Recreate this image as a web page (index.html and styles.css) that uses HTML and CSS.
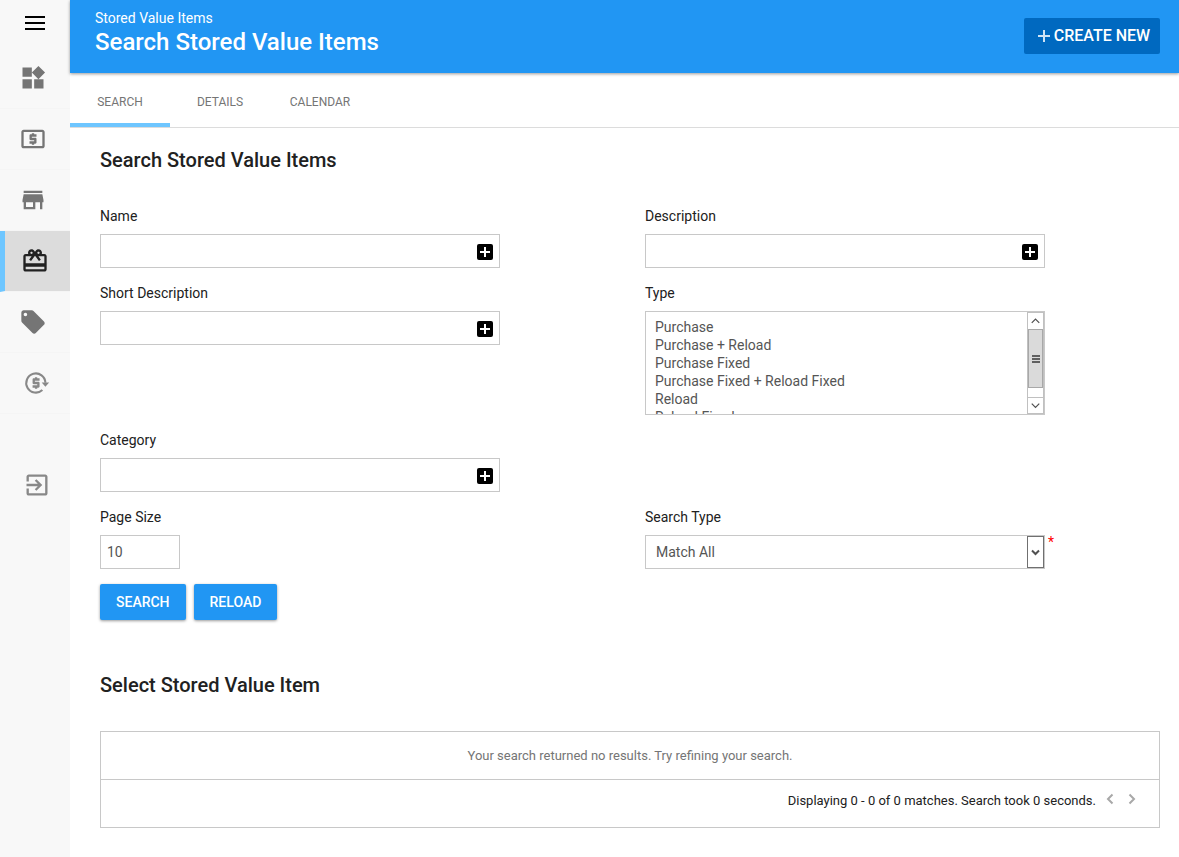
FILE: index.html
```html
<!DOCTYPE html>
<html lang="en">
<head>
<meta charset="utf-8">
<meta name="viewport" content="width=device-width, initial-scale=1">
<title>Search Stored Value Items</title>
<link rel="stylesheet" href="styles.css">
</head>
<body>
<div class="app">
  <aside class="sidebar">
    <button class="menu-button" type="button" aria-label="Menu">
      <svg width="20" height="14" viewBox="0 0 20 14"><path d="M0 0h20v2H0zM0 6h20v2H0zM0 12h20v2H0z"/></svg>
    </button>
    <nav class="side-nav" aria-label="Main">
      <a class="side-link" href="#" aria-label="Dashboard">
        <svg class="side-icon" viewBox="0 0 24 24"><path d="M13 13v8h8v-8h-8zM3 21h8v-8H3v8zM3 3v8h8V3H3zm13.66-1.31L11 7.34 16.66 13l5.66-5.66-5.66-5.65z"/></svg>
      </a>
      <a class="side-link" href="#" aria-label="Cash">
        <svg class="side-icon" viewBox="0 0 24 24"><path d="M11 17h2v-1h1c.55 0 1-.45 1-1v-3c0-.55-.45-1-1-1h-3v-1h4V8h-2V7h-2v1h-1c-.55 0-1 .45-1 1v3c0 .55.45 1 1 1h3v1H9v2h2v1zm9-13H4c-1.11 0-1.99.89-1.99 2L2 18c0 1.11.89 2 2 2h16c1.11 0 2-.89 2-2V6c0-1.11-.89-2-2-2zm0 14H4V6h16v12z"/></svg>
      </a>
      <a class="side-link" href="#" aria-label="Store">
        <svg class="side-icon" viewBox="0 0 24 24"><path d="M20 4H4v2h16V4zm1 10v-2l-1-5H4l-1 5v2h1v6h10v-6h4v6h2v-6h1zm-9 4H6v-4h6v4z"/></svg>
      </a>
      <a class="side-link side-link-active" href="#" aria-label="Stored value items" aria-current="page">
        <svg class="side-icon" viewBox="0 0 24 24"><path d="M20 6h-2.18c.11-.31.18-.65.18-1 0-1.66-1.34-3-3-3-1.05 0-1.96.54-2.5 1.35l-.5.67-.5-.68C10.96 2.54 10.05 2 9 2 7.34 2 6 3.34 6 5c0 .35.07.69.18 1H4c-1.11 0-1.99.89-1.99 2L2 19c0 1.11.89 2 2 2h16c1.11 0 2-.89 2-2V8c0-1.11-.89-2-2-2zm-5-2c.55 0 1 .45 1 1s-.45 1-1 1-1-.45-1-1 .45-1 1-1zM9 4c.55 0 1 .45 1 1s-.45 1-1 1-1-.45-1-1 .45-1 1-1zm11 15H4v-2h16v2zm0-5H4V8h5.08L7 10.83 8.62 12 11 8.76l1-1.36 1 1.36L15.38 12 17 10.83 14.92 8H20v6z"/></svg>
      </a>
      <a class="side-link" href="#" aria-label="Tags">
        <svg class="side-icon" viewBox="0 0 24 24"><path d="M21.41 11.58l-9-9C12.05 2.22 11.55 2 11 2H4c-1.1 0-2 .9-2 2v7c0 .55.22 1.05.59 1.42l9 9c.36.36.86.58 1.41.58.55 0 1.05-.22 1.41-.59l7-7c.37-.36.59-.86.59-1.41 0-.55-.23-1.06-.59-1.42zM5.5 7C4.67 7 4 6.33 4 5.5S4.67 4 5.5 4 7 4.67 7 5.5 6.33 7 5.5 7z"/></svg>
      </a>
      <a class="side-link side-link-light" href="#" aria-label="Refunds">
        <svg class="side-icon" viewBox="0 0 24 24"><path fill="none" stroke="currentColor" stroke-width="1.8" d="M19.200 11.800A8.200 8.200 0 1 0 16.600 18"/><path d="M16 11.500h6.400L19.200 15.200zM10.200 17h2v-1h1c.55 0 1-.45 1-1v-3c0-.55-.45-1-1-1h-3v-1h4V8h-2V7h-2v1h-1c-.55 0-1 .45-1 1v3c0 .55.45 1 1 1h3v1h-4v2h2v1z"/></svg>
      </a>
      <a class="side-link side-link-light side-link-exit" href="#" aria-label="Sign out">
        <svg class="side-icon" viewBox="0 0 24 24"><path d="M10.09 15.59L11.5 17l5-5-5-5-1.41 1.41L12.67 11H3v2h9.67l-2.58 2.59zM19 3H5c-1.11 0-2 .9-2 2v4h2V5h14v14H5v-4H3v4c0 1.1.89 2 2 2h14c1.1 0 2-.9 2-2V5c0-1.1-.9-2-2-2z"/></svg>
      </a>
    </nav>
  </aside>

  <div class="page">
    <header class="topbar">
      <div class="titles">
        <p class="breadcrumb">Stored Value Items</p>
        <h1 class="page-title">Search Stored Value Items</h1>
      </div>
      <button class="create-button" type="button">
        <svg width="12" height="12" viewBox="0 0 12 12"><path d="M5 0h2v5h5v2H7v5H5V7H0V5h5z"/></svg>
        CREATE NEW
      </button>
    </header>

    <nav class="tabs" aria-label="Sections">
      <a class="tab tab-active" href="#" aria-current="page">SEARCH</a>
      <a class="tab" href="#">DETAILS</a>
      <a class="tab" href="#">CALENDAR</a>
    </nav>

    <main class="content">
      <h2 class="section-title">Search Stored Value Items</h2>
      <form class="search-form">
        <div class="fields">
          <div class="field">
            <label class="label" for="name">Name</label>
            <div class="control">
              <input class="input" id="name" type="text">
              <button class="add-button" type="button" aria-label="Add name"><svg width="16" height="16" viewBox="0 0 16 16"><rect width="16" height="16" rx="2"/><path fill="#fff" d="M7 3h2v4h4v2H9v4H7V9H3V7h4z"/></svg></button>
            </div>
          </div>
          <div class="field">
            <label class="label" for="description">Description</label>
            <div class="control">
              <input class="input" id="description" type="text">
              <button class="add-button" type="button" aria-label="Add description"><svg width="16" height="16" viewBox="0 0 16 16"><rect width="16" height="16" rx="2"/><path fill="#fff" d="M7 3h2v4h4v2H9v4H7V9H3V7h4z"/></svg></button>
            </div>
          </div>
          <div class="field">
            <label class="label" for="short-description">Short Description</label>
            <div class="control">
              <input class="input" id="short-description" type="text">
              <button class="add-button" type="button" aria-label="Add short description"><svg width="16" height="16" viewBox="0 0 16 16"><rect width="16" height="16" rx="2"/><path fill="#fff" d="M7 3h2v4h4v2H9v4H7V9H3V7h4z"/></svg></button>
            </div>
          </div>
          <div class="field">
            <label class="label" for="type">Type</label>
            <div class="control">
              <select class="listbox" id="type" multiple>
                <option>Purchase</option>
                <option>Purchase + Reload</option>
                <option>Purchase Fixed</option>
                <option>Purchase Fixed + Reload Fixed</option>
                <option>Reload</option>
                <option>Reload Fixed</option>
              </select>
              <div class="scrollbar" aria-hidden="true">
                <svg class="scroll-arrow" viewBox="0 0 16 16"><path d="M4 10l4-4 4 4"/></svg>
                <div class="scroll-thumb"><svg width="8" height="8" viewBox="0 0 8 8"><path d="M0 0h8v2H0zM0 3h8v2H0zM0 6h8v2H0z"/></svg></div>
                <svg class="scroll-arrow scroll-down" viewBox="0 0 16 16"><path d="M4 6l4 4 4-4"/></svg>
              </div>
            </div>
          </div>
          <div class="field field-first">
            <label class="label" for="category">Category</label>
            <div class="control">
              <input class="input" id="category" type="text">
              <button class="add-button" type="button" aria-label="Add category"><svg width="16" height="16" viewBox="0 0 16 16"><rect width="16" height="16" rx="2"/><path fill="#fff" d="M7 3h2v4h4v2H9v4H7V9H3V7h4z"/></svg></button>
            </div>
          </div>
          <div class="field field-first">
            <label class="label" for="page-size">Page Size</label>
            <input class="input input-short" id="page-size" type="text" value="10">
          </div>
          <div class="field">
            <label class="label" for="search-type">Search Type</label>
            <div class="control">
              <select class="input dropdown" id="search-type" required>
                <option>Match All</option>
                <option>Match Any</option>
              </select>
              <span class="dropdown-arrow" aria-hidden="true"><svg width="9" height="7" viewBox="0 0 9 7"><path d="M1 1.500l3.500 3.500L8 1.500"/></svg></span>
              <span class="required">*</span>
            </div>
          </div>
        </div>
        <div class="actions">
          <button class="button" type="submit">SEARCH</button>
          <button class="button" type="button">RELOAD</button>
        </div>
      </form>

      <h2 class="section-title results-title">Select Stored Value Item</h2>
      <section class="results" aria-label="Results">
        <p class="results-empty">Your search returned no results. Try refining your search.</p>
        <div class="results-footer">
          <span>Displaying 0 - 0 of 0 matches. Search took 0 seconds.</span>
          <div class="pager">
            <button class="pager-button" type="button" aria-label="Previous page"><svg width="8" height="12" viewBox="0 0 8 12"><path d="M6.500 1.500L2 6l4.500 4.500"/></svg></button>
            <button class="pager-button" type="button" aria-label="Next page"><svg width="8" height="12" viewBox="0 0 8 12"><path d="M1.500 1.500L6 6l-4.500 4.500"/></svg></button>
          </div>
        </div>
      </section>
    </main>
  </div>
</div>
</body>
</html>
```
FILE: styles.css
```css
* { box-sizing: border-box; }
body {
  margin: 0;
  background: #fff;
  color: #212121;
  font-family: Roboto, "Liberation Sans", sans-serif;
  font-size: 14px;
  line-height: 18px;
}
button, input, select { font: inherit; margin: 0; }
button { border: 0; padding: 0; background: none; cursor: pointer; }
a { text-decoration: none; color: inherit; }
h1, h2, p { margin: 0; }
svg { display: block; flex: none; }

.app { display: flex; min-height: 100vh; }

/* Sidebar */
.sidebar { flex: none; width: 70px; background: #f8f8f8; }
.menu-button {
  display: flex;
  align-items: center;
  justify-content: center;
  width: 100%;
  height: 46px;
  margin-bottom: 2px;
}
.side-nav { display: flex; flex-direction: column; }
.side-link {
  display: flex;
  align-items: center;
  height: 61px;
  padding-left: 19px;
  border-bottom: 1px solid #f5f5f5;
  color: #757575;
}
.side-icon { width: 28px; height: 28px; fill: currentColor; }
.side-link-active {
  padding-left: 16px;
  border-left: 5px solid #6ec6ff;
  background: #dcdcdc;
  background-clip: padding-box;
  color: #212121;
}
.side-link-light { padding-left: 23px; color: #888; }
.side-link-exit { margin-top: 41px; border-bottom-color: transparent; }

/* Header */
.page { flex: 1; min-width: 0; }
.topbar {
  position: relative;
  display: flex;
  align-items: flex-start;
  justify-content: space-between;
  height: 73px;
  padding: 9px 19px 0 25px;
  background: #2196f3;
  color: #fff;
  box-shadow: 0 1px 3px rgba(0, 0, 0, 0.4);
}
.page-title { font-size: 24px; line-height: 30px; font-weight: 500; }
.create-button {
  display: flex;
  align-items: center;
  justify-content: center;
  gap: 4px;
  width: 136px;
  height: 36px;
  margin-top: 9px;
  padding-left: 4px;
  border-radius: 2px;
  background: #0069c0;
  color: #fff;
  font-size: 16px;
  font-weight: 500;
}
.create-button svg { fill: #cfe3f5; }

/* Tabs */
.tabs { display: flex; height: 55px; border-bottom: 1px solid #dcdcdc; }
.tab {
  display: flex;
  align-items: center;
  justify-content: center;
  min-width: 100px;
  padding: 7px 16px 0;
  border-bottom: 4px solid transparent;
  color: #757575;
  font-size: 12px;
}
.tab-active { border-bottom-color: #6ec6ff; }

/* Search form */
.content { padding: 20px 19px 28px 30px; }
.section-title { font-size: 20px; line-height: 24px; font-weight: 500; }
.search-form { margin-top: 35px; }
.fields {
  display: grid;
  grid-template-columns: repeat(2, minmax(0, 1fr));
  gap: 16px 30px;
}
.field { display: flex; flex-direction: column; gap: 9px; align-items: flex-start; }
.field-first { grid-column: 1; }
.control { position: relative; width: 100%; max-width: 400px; }
.input, .listbox {
  display: block;
  width: 100%;
  border: 1px solid #c8c8c8;
  border-radius: 0;
  background: #fff;
  color: #555;
}
.input { height: 34px; padding: 0 6px; }
.input-short { width: 80px; }
.add-button { position: absolute; top: 10px; right: 7px; }
.listbox { height: 104px; padding: 7px 24px 6px 7px; overflow: hidden; }
.listbox option { min-height: 18px; padding: 0 2px; line-height: 18px; }
.dropdown { padding: 0 26px 0 10px; appearance: none; }
.scrollbar {
  position: absolute;
  top: 1px;
  right: 1px;
  bottom: 1px;
  display: flex;
  flex-direction: column;
  width: 17px;
  border: 1px solid #c0c0c0;
  background: #fff;
}
.scroll-arrow { width: 15px; height: 16px; fill: none; stroke: #505050; stroke-width: 1.3; }
.scroll-down { margin-top: auto; border-top: 1px solid #c0c0c0; }
.scroll-thumb {
  display: flex;
  align-items: center;
  justify-content: center;
  height: 59px;
  border: 1px solid #a8a8a8;
  background: #dadada;
}
.scroll-thumb svg { fill: #606060; }
.dropdown-arrow {
  position: absolute;
  top: 1px;
  right: 1px;
  bottom: 1px;
  display: flex;
  align-items: center;
  justify-content: center;
  width: 17px;
  border: 1px solid #707070;
  background: #fff;
  pointer-events: none;
}
.dropdown-arrow svg { fill: none; stroke: #505050; stroke-width: 2; }
.required { position: absolute; top: -2px; left: calc(100% + 3px); color: #f00; }
.actions { display: flex; gap: 8px; margin-top: 15px; }
.button {
  height: 36px;
  padding: 0 16px;
  border-radius: 2px;
  background: #2196f3;
  box-shadow: 0 1px 3px rgba(0, 0, 0, 0.4);
  color: #fff;
  font-weight: 500;
}

/* Results */
.results-title { margin-top: 53px; }
.results { margin-top: 34px; border: 1px solid #c8c8c8; font-size: 13px; }
.results-empty { padding: 15px 15px 14px; border-bottom: 1px solid #c8c8c8; color: #757575; text-align: center; }
.results-footer {
  display: flex;
  align-items: center;
  justify-content: flex-end;
  gap: 10px;
  padding: 12px 23px 17px;
}
.pager { display: flex; gap: 14px; padding-bottom: 4px; }
.pager-button svg { fill: none; stroke: #a8a8a8; stroke-width: 2; }
```
